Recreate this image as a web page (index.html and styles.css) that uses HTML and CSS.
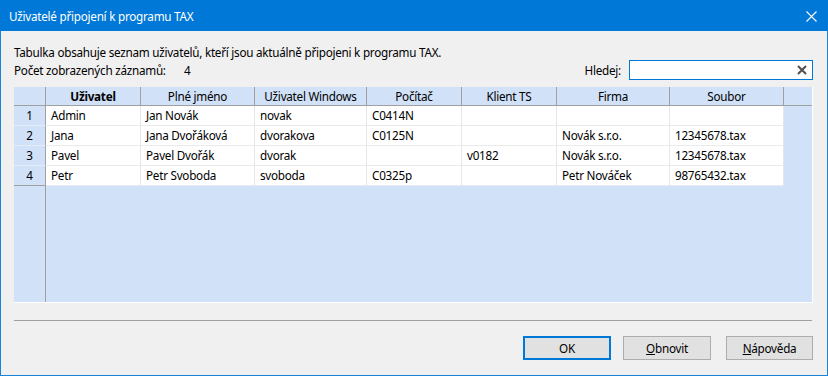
FILE: index.html
```html
<!DOCTYPE html>
<html lang="cs">
<head>
  <meta charset="UTF-8">
  <title>Uživatelé připojení k programu TAX</title>
  <link rel="stylesheet" href="styles.css">
</head>
<body>

  <div class="window">
    <div class="titlebar">
      <span class="title">Uživatelé připojení k programu TAX</span>
      <svg class="close" width="11" height="11" viewBox="0 0 11 11">
        <path d="M0.5 0.5 L10.5 10.5 M10.5 0.5 L0.5 10.5" stroke="#fff" stroke-width="1.1" fill="none"/>
      </svg>
    </div>

    <div class="content">
      <p class="intro">Tabulka obsahuje seznam uživatelů, kteří jsou aktuálně připojeni k programu TAX.</p>

      <div class="toprow">
        <span class="count-label">Počet zobrazených záznamů:</span>
        <span class="count">4</span>
        <label class="search-label" for="search">Hledej:</label>
        <div class="search">
          <input type="text" id="search">
          <svg class="clear" width="10" height="10" viewBox="0 0 10 10">
            <path d="M1 1 L9 9 M9 1 L1 9" stroke="#505050" stroke-width="2" fill="none"/>
          </svg>
        </div>
      </div>

      <div class="grid">
        <div class="row head">
          <div class="cell rn"></div>
          <div class="cell"><b>Uživatel</b></div>
          <div class="cell">Plné jméno</div>
          <div class="cell">Uživatel Windows</div>
          <div class="cell">Počítač</div>
          <div class="cell">Klient TS</div>
          <div class="cell">Firma</div>
          <div class="cell">Soubor</div>
          <div class="cell filler"></div>
        </div>
        <div class="row">
          <div class="cell rn">1</div>
          <div class="cell">Admin</div>
          <div class="cell">Jan Novák</div>
          <div class="cell">novak</div>
          <div class="cell">C0414N</div>
          <div class="cell"></div>
          <div class="cell"></div>
          <div class="cell"></div>
        </div>
        <div class="row">
          <div class="cell rn">2</div>
          <div class="cell">Jana</div>
          <div class="cell">Jana Dvořáková</div>
          <div class="cell">dvorakova</div>
          <div class="cell">C0125N</div>
          <div class="cell"></div>
          <div class="cell">Novák s.r.o.</div>
          <div class="cell">12345678.tax</div>
        </div>
        <div class="row">
          <div class="cell rn">3</div>
          <div class="cell">Pavel</div>
          <div class="cell">Pavel Dvořák</div>
          <div class="cell">dvorak</div>
          <div class="cell"></div>
          <div class="cell">v0182</div>
          <div class="cell">Novák s.r.o.</div>
          <div class="cell">12345678.tax</div>
        </div>
        <div class="row last">
          <div class="cell rn">4</div>
          <div class="cell">Petr</div>
          <div class="cell">Petr Svoboda</div>
          <div class="cell">svoboda</div>
          <div class="cell">C0325p</div>
          <div class="cell"></div>
          <div class="cell">Petr Nováček</div>
          <div class="cell">98765432.tax</div>
        </div>
      </div>

      <div class="separator"></div>

      <div class="buttons">
        <button class="btn default">OK</button>
        <button class="btn"><u>O</u>bnovit</button>
        <button class="btn"><u>N</u>ápověda</button>
      </div>
    </div>
  </div>

</body>
</html>
```

FILE: styles.css
```css
body {
  margin: 0;
  font-family: 'Noto Sans', sans-serif;
  font-size: 11.7px;
  letter-spacing: -0.25px;
  color: #000;
  background-color: #f0f0f0;
}

.window {
  width: 828px;
  height: 376px;
  box-sizing: border-box;
  border: 1px solid #1883d7;
  border-top: none;
  background-color: #f0f0f0;
}

.titlebar {
  height: 31px;
  margin: 0 -1px;
  background-color: #0078d7;
  color: #fff;
  display: flex;
  align-items: center;
  padding: 0 11px 0 9px;
}

.title {
  flex: 1;
  padding-top: 1px;
}

.close {
  margin-top: 1px;
}

.content {
  padding: 13px 14px 0 13px;
}

.intro {
  margin: 0;
  height: 16px;
  line-height: 16px;
}

.toprow {
  display: flex;
  align-items: center;
  height: 20px;
}

.count-label {
  width: 170px;
}

.count {
  flex: 1;
}

.search-label {
  margin-right: 8px;
}

.search {
  width: 184px;
  height: 20px;
  box-sizing: border-box;
  border: 1px solid #0078d7;
  background: #fff;
  display: flex;
  align-items: center;
}

.search input {
  flex: 1;
  min-width: 0;
  border: none;
  outline: none;
  height: 16px;
  padding: 0 4px;
  font: inherit;
  letter-spacing: inherit;
}

.clear {
  margin-right: 5px;
}

.grid {
  margin-top: 7px;
  width: 798px;
  height: 215px;
  border-right: 1px solid #fff;
  border-bottom: 1px solid #fff;
  background: linear-gradient(#a0a0a0, #a0a0a0) 31px 0 / 1px 100% no-repeat, #d0e1f8;
}

.row {
  display: grid;
  grid-template-columns: 32px 95px 114px 112px 95px 95px 113px 114px 28px;
  height: 20px;
}

.cell {
  box-sizing: border-box;
  background: #fff;
  border-right: 1px solid #e6e6e6;
  border-bottom: 1px solid #ebebeb;
  padding: 0 5px;
  line-height: 19px;
  white-space: nowrap;
  overflow: hidden;
}

.cell.rn {
  background: transparent;
  border-right: 1px solid #a0a0a0;
  border-bottom: 1px solid #e4ecf8;
  text-align: center;
  padding: 0;
}

.row.last .cell.rn {
  border-bottom-color: #a0a0a0;
}

.head {
  height: 19px;
}

.head .cell {
  background: transparent;
  border-right: 1px solid #a0a0a0;
  border-bottom: 1px solid #a0a0a0;
  text-align: center;
  line-height: 18px;
}

.head .cell b {
  font-weight: bold;
}

.head .cell.filler {
  border-right: none;
}

.separator {
  margin-top: 17px;
  width: 798px;
  height: 1px;
  background: #a0a0a0;
}

.buttons {
  display: flex;
  justify-content: flex-end;
  margin-top: 15px;
  width: 799px;
}

.btn {
  width: 88px;
  height: 24px;
  margin-left: 12px;
  box-sizing: border-box;
  border: 1px solid #adadad;
  background: #e1e1e1;
  font: inherit;
  letter-spacing: inherit;
  color: #000;
  padding: 0;
}

.btn:last-child {
  width: 87px;
  margin-left: 15px;
}

.btn.default {
  border: 2px solid #0078d7;
}
```
